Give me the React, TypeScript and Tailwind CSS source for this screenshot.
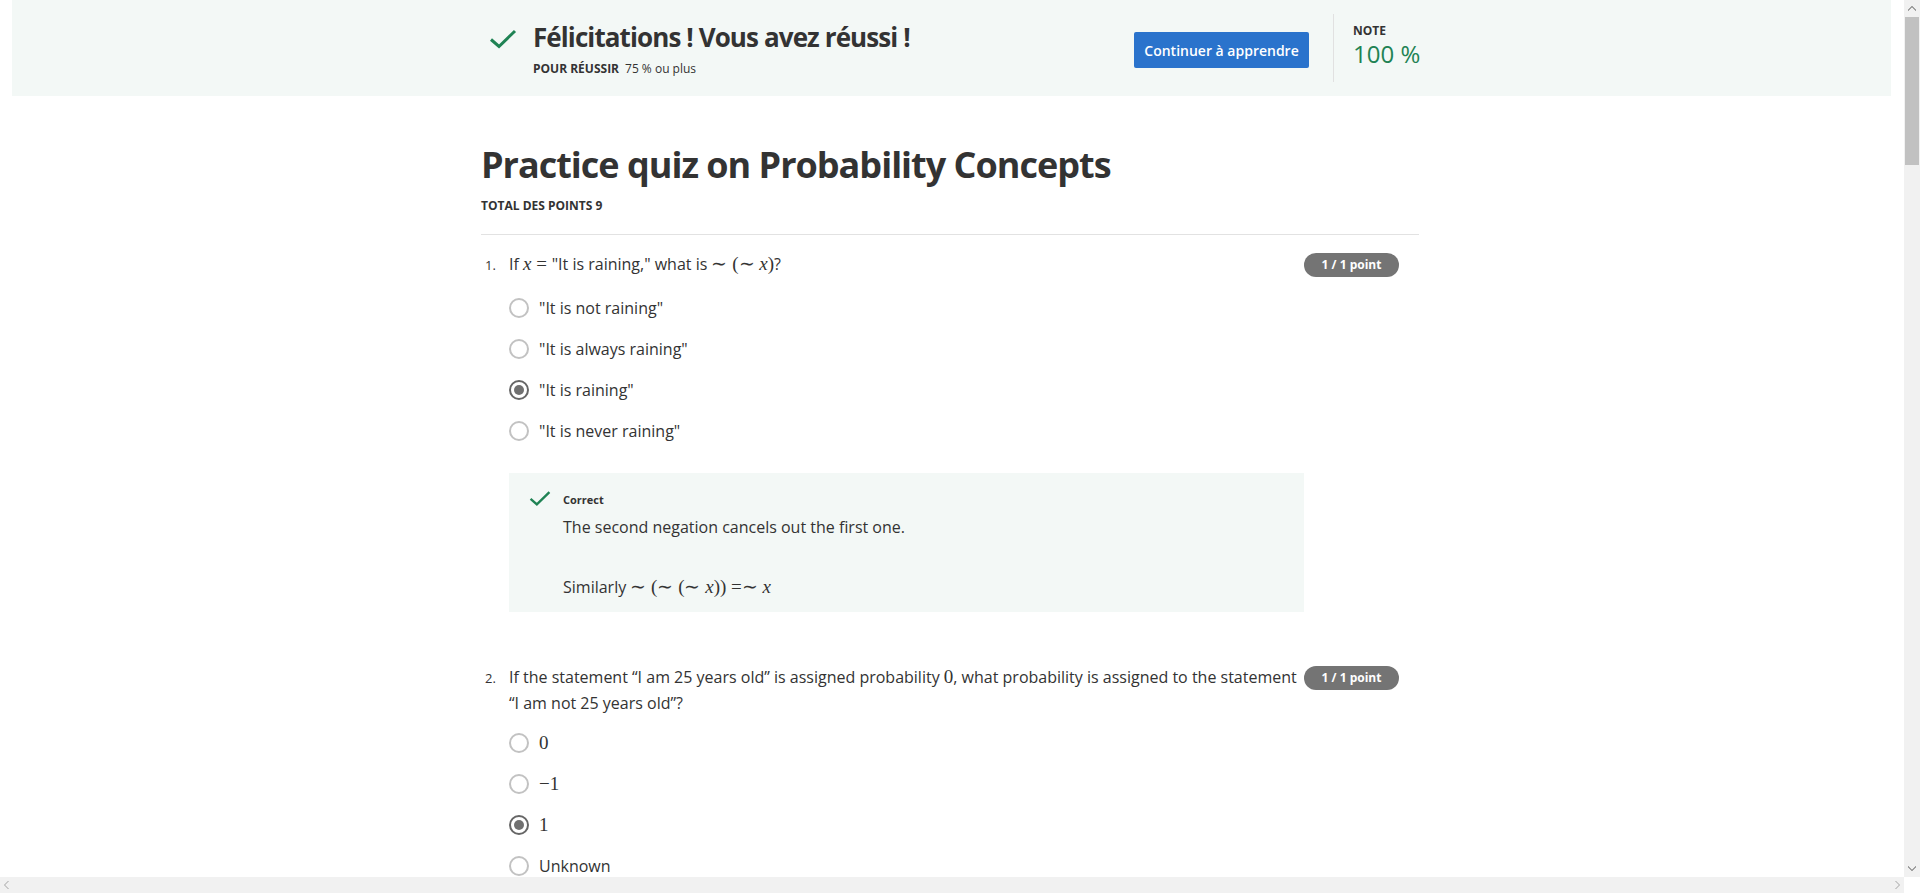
import React from "react";

function Check({ className }: { className: string }) {
  return (
    <svg viewBox="0 0 28 20" className={className} fill="none">
      <polyline points="2,10.5 10,17.5 26,2" stroke="#1f8354" strokeWidth="3" />
    </svg>
  );
}

function M({ children, i }: { children: React.ReactNode; i?: boolean }) {
  return (
    <span className={i ? "font-['Liberation_Serif',serif] text-[19px] italic" : "font-['Liberation_Serif',serif] text-[19px]"}>
      {children}
    </span>
  );
}

function Radio({ checked }: { checked?: boolean }) {
  if (checked) {
    return (
      <span className="w-5 h-5 shrink-0 rounded-full border-2 border-[#666666] flex items-center justify-center">
        <span className="w-[10px] h-[10px] rounded-full bg-[#707070]" />
      </span>
    );
  }
  return <span className="w-5 h-5 shrink-0 rounded-full border-2 border-[#c2c2c2]" />;
}

function Option({ checked, children }: { checked?: boolean; children: React.ReactNode }) {
  return (
    <div className="flex items-center h-[41px] gap-[10px] text-[16px] text-[#333333]">
      <Radio checked={checked} />
      <span className="leading-[24px]">{children}</span>
    </div>
  );
}

function Badge() {
  return (
    <div className="mt-[2px] h-[24px] w-[95px] rounded-full bg-[#747474] text-white text-[12px] font-bold flex items-center justify-center">
      1 / 1 point
    </div>
  );
}

export default function App() {
  return (
    <div className="w-[1920px] h-[893px] overflow-hidden flex flex-col bg-white font-['Open_Sans',sans-serif] text-[#333333]">
      <div className="flex h-[877px]">
        <main className="w-[1904px] h-[877px] overflow-hidden">
          {/* Banner */}
          <div className="ml-[12px] w-[1879px] h-[96px] bg-[#f3f8f6]">
            <div className="ml-[469px] w-[938px] h-full pl-2 flex items-center">
              <div className="flex-1 flex items-start">
                <Check className="w-[28px] h-[20px] mt-[10px]" />
                <div className="ml-[16px] flex flex-col">
                  <div className="text-[26px] leading-[36px] font-bold tracking-[-0.9px] text-[#333333] whitespace-nowrap">Félicitations ! Vous avez réussi !</div>
                  <div className="mt-[6px] text-[12px] leading-[16px]">
                    <span className="font-bold">POUR RÉUSSIR</span>
                    <span className="ml-[6px]">75 % ou plus</span>
                  </div>
                </div>
              </div>
              <button className="mt-[4px] w-[175px] h-[36px] rounded-[2px] bg-[#2a73cc] text-white text-[14px] font-semibold">
                Continuer à apprendre
              </button>
              <div className="ml-[24px] w-px h-[68px] bg-[#e1e1e1]" />
              <div className="ml-[19px] w-[66px] flex flex-col -mt-[3px]">
                <div className="text-[12px] leading-[16px] font-bold">NOTE</div>
                <div className="-mt-[1px] text-[24px] leading-[32px] text-[#1f8354] whitespace-nowrap">100 %</div>
              </div>
            </div>
          </div>

          {/* Content */}
          <div className="ml-[481px] w-[938px]">
            <h1 className="mt-[46px] text-[36px] leading-[46px] font-bold tracking-[-1px] text-[#333333]">Practice quiz on Probability Concepts</h1>
            <div className="mt-[10px] text-[12px] leading-[16px] font-bold">TOTAL DES POINTS 9</div>
            <div className="mt-[20px] h-px bg-[#e2e2e2]" />

            {/* Q1 */}
            <div className="mt-[16px] flex">
              <div className="w-[28px] pl-[4px] text-[13px] leading-[26px] pt-[1px]">1.</div>
              <div className="w-[795px]">
                <div className="text-[16px] leading-[26px] h-[26px]">
                  If <M i>x</M>
                  <M>&nbsp;=&nbsp;</M>"It is raining," what is <M>∼&nbsp;(∼&nbsp;</M>
                  <M i>x</M>
                  <M>)</M>?
                </div>
                <div className="mt-[10px] flex flex-col">
                  <Option>"It is not raining"</Option>
                  <Option>"It is always raining"</Option>
                  <Option checked>"It is raining"</Option>
                  <Option>"It is never raining"</Option>
                </div>
                <div className="mt-[22px] h-[139px] bg-[#f3f8f6] pt-[17px] pl-[20px] flex">
                  <Check className="w-[22px] h-[17px] shrink-0" />
                  <div className="ml-[12px] flex flex-col">
                    <div className="text-[11px] leading-[18px] font-bold mt-[1px]">Correct</div>
                    <div className="mt-[6px] text-[16px] leading-[24px]">The second negation cancels out the first one.</div>
                    <div className="mt-[36px] text-[16px] leading-[24px] h-[24px]">
                      Similarly <M>∼&nbsp;(∼&nbsp;(∼&nbsp;</M>
                      <M i>x</M>
                      <M>))&nbsp;=∼&nbsp;</M>
                      <M i>x</M>
                    </div>
                  </div>
                </div>
              </div>
              <div className="w-[95px]">
                <Badge />
              </div>
            </div>

            {/* Q2 */}
            <div className="mt-[52px] flex">
              <div className="w-[28px] pl-[4px] text-[13px] leading-[26px] pt-[1px]">2.</div>
              <div className="w-[795px]">
                <div className="text-[16px] leading-[26px] pr-[6px]">
                  If the statement “I am 25 years old” is assigned probability <M>0</M>, what probability is assigned to the statement “I am not 25 years old”?
                </div>
                <div className="mt-[6px] flex flex-col">
                  <Option><M>0</M></Option>
                  <Option><M>−1</M></Option>
                  <Option checked><M>1</M></Option>
                  <Option>Unknown</Option>
                </div>
              </div>
              <div className="w-[95px]">
                <Badge />
              </div>
            </div>
          </div>
        </main>

        {/* Vertical scrollbar */}
        <div className="w-[16px] h-[877px] bg-[#f1f1f1] flex flex-col">
          <div className="h-[17px] flex items-center justify-center">
            <svg viewBox="0 0 8 5" className="w-[8px] h-[5px]">
              <polygon points="0,5 4,1 8,5 8,4 4,0 0,4" fill="#505050" />
            </svg>
          </div>
          <div className="mx-[1px] h-[148px] bg-[#c1c1c1]" />
          <div className="flex-1" />
          <div className="h-[17px] flex items-center justify-center">
            <svg viewBox="0 0 8 5" className="w-[8px] h-[5px]">
              <polygon points="0,0 4,4 8,0 8,1 4,5 0,1" fill="#505050" />
            </svg>
          </div>
        </div>
      </div>

      {/* Horizontal scrollbar */}
      <div className="flex h-[16px]">
        <div className="w-[1904px] h-[16px] bg-[#f1f1f1] flex items-center justify-between px-[4px]">
          <svg viewBox="0 0 5 8" className="w-[5px] h-[8px]">
            <polygon points="5,0 1,4 5,8 4,8 0,4 4,0" fill="#a3a3a3" />
          </svg>
          <svg viewBox="0 0 5 8" className="w-[5px] h-[8px]">
            <polygon points="0,0 4,4 0,8 1,8 5,4 1,0" fill="#a3a3a3" />
          </svg>
        </div>
        <div className="w-[16px] h-[16px] bg-white" />
      </div>
    </div>
  );
}
